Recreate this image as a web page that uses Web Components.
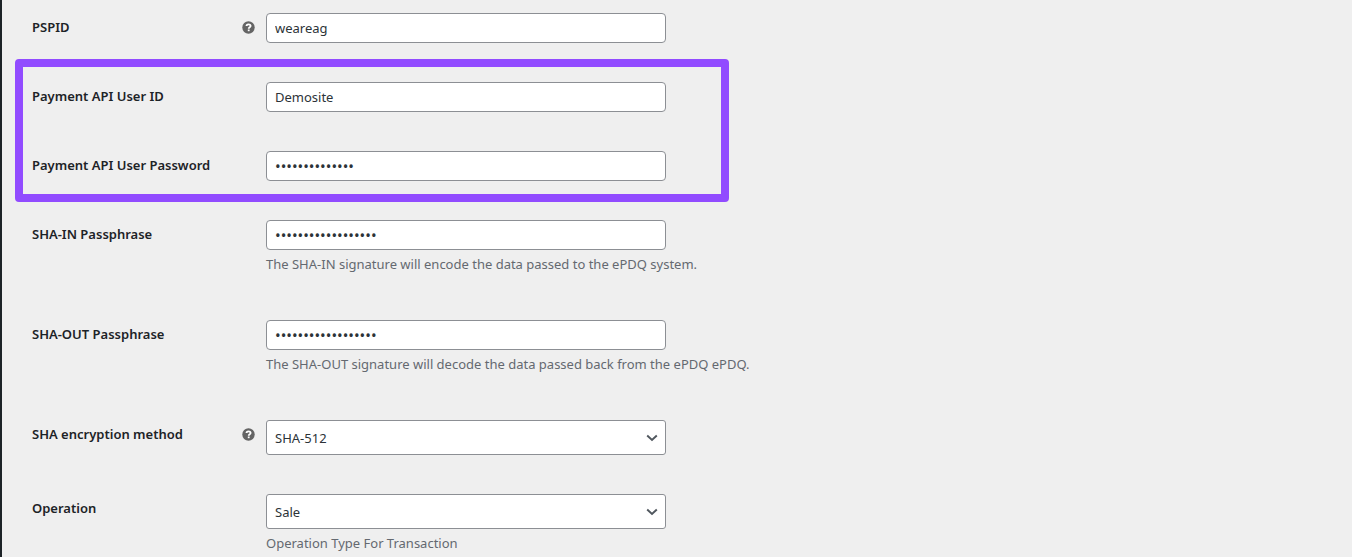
<!DOCTYPE html>
<html lang="en">
<head>
  <meta charset="utf-8">
  <meta name="viewport" content="width=device-width, initial-scale=1">
  <title>Payment settings</title>
  <style>
    body {
      margin: 0;
      background: #efefef;
      color: #1d2327;
      font-family: "Noto Sans", "Open Sans", sans-serif;
      font-size: 13px;
    }
  </style>
</head>
<body>
  <settings-page>
    <settings-field name="pspid" label="PSPID" value="weareag" help></settings-field>
    <highlight-group>
      <settings-field name="api-user" label="Payment API User ID" value="Demosite"></settings-field>
      <settings-field name="api-password" type="password" label="Payment API User Password" value="demo-site-pass"></settings-field>
    </highlight-group>
    <settings-field name="sha-in" type="password" label="SHA-IN Passphrase" value="sha-in-passphrase1">The SHA-IN signature will encode the data passed to the ePDQ system.</settings-field>
    <settings-field name="sha-out" type="password" label="SHA-OUT Passphrase" value="sha-out-passphrase">The SHA-OUT signature will decode the data passed back from the ePDQ ePDQ.</settings-field>
    <settings-field name="sha-method" type="select" label="SHA encryption method" value="SHA-512" help></settings-field>
    <settings-field name="operation" type="select" label="Operation" value="Sale">Operation Type For Transaction</settings-field>
  </settings-page>

  <script>
    class SettingsPage extends HTMLElement {
      connectedCallback() {
        this.attachShadow({ mode: 'open' });
        this.shadowRoot.innerHTML = `
          <style>
            :host {
              display: block;
              min-height: 100vh;
              box-sizing: border-box;
              border-left: 2px solid #1d2327;
              padding: 13px 30px 0;
              overflow: hidden;
            }
            form {
              display: flex;
              flex-direction: column;
              gap: 39px;
            }
          </style>
          <form><slot></slot></form>
        `;
      }
    }

    // Purple frame drawn around the rows it holds
    class HighlightGroup extends HTMLElement {
      connectedCallback() {
        this.attachShadow({ mode: 'open' });
        this.shadowRoot.innerHTML = `
          <style>
            :host {
              display: flex;
              flex-direction: column;
              gap: 39px;
              position: relative;
              max-width: 634px;
            }
            .frame {
              position: absolute;
              inset: -23px -63px -21px -17px;
              border: 8px solid #914bff;
              border-radius: 4px;
              pointer-events: none;
            }
          </style>
          <slot></slot>
          <div class="frame"></div>
        `;
      }
    }

    class HelpTip extends HTMLElement {
      connectedCallback() {
        this.attachShadow({ mode: 'open' });
        this.shadowRoot.innerHTML = `
          <style>
            :host { display: block; width: 13px; height: 13px; color: #646464; cursor: help; }
            svg { display: block; }
          </style>
          <svg width="13" height="13" viewBox="0 0 13 13" aria-hidden="true">
            <circle cx="6.5" cy="6.5" r="6.2" fill="currentColor"/>
            <path d="M4.5 5C4.5 3.8 5.3 3.3 6.5 3.3s2.1.6 2.1 1.7C8.6 6.3 6.7 6.2 6.7 7.7" fill="none" stroke="#fff" stroke-width="1.8"/>
            <rect x="5.8" y="8.5" width="1.8" height="1.7" fill="#fff"/>
          </svg>
        `;
      }
    }

    class SettingsField extends HTMLElement {
      connectedCallback() {
        const name = this.getAttribute('name');
        const label = this.getAttribute('label');
        const value = this.getAttribute('value');
        const type = this.getAttribute('type') || 'text';
        const help = this.hasAttribute('help') ? '<help-tip></help-tip>' : '';
        const description = this.textContent.trim() ? '<p><slot></slot></p>' : '';

        const options = {
          'sha-method': ['SHA-1', 'SHA-256', 'SHA-512'],
          'operation': ['Sale', 'Authorisation']
        };

        let control = `<input id="${name}" name="${name}" type="${type}" value="${value}" autocomplete="off">`;
        if (type === 'select') {
          const items = options[name].map(o => `<option${o === value ? ' selected' : ''}>${o}</option>`).join('');
          control = `
            <div class="select">
              <select id="${name}" name="${name}">${items}</select>
              <svg width="12" height="8" viewBox="0 0 12 8" aria-hidden="true">
                <path d="M1.2 1.5L6 6l4.8-4.5" fill="none" stroke="#50575e" stroke-width="1.9"/>
              </svg>
            </div>`;
        }

        this.attachShadow({ mode: 'open' });
        this.shadowRoot.innerHTML = `
          <style>
            :host {
              display: grid;
              grid-template-columns: 234px minmax(0, 1fr);
            }
            .heading {
              display: flex;
              justify-content: space-between;
              align-items: center;
              align-self: start;
              height: 18px;
              padding: 5px 11px 0 0;
            }
            label {
              font-weight: 600;
              line-height: 18px;
            }
            input, select {
              display: block;
              box-sizing: border-box;
              width: 100%;
              max-width: 400px;
              margin: 0;
              border: 1px solid #8c8f94;
              border-radius: 4px;
              background: #fff;
              color: #2c3338;
              font: inherit;
            }
            input {
              height: 30px;
              padding: 0 8px;
            }
            input[type="password"] {
              font-size: 15px;
            }
            .select {
              display: grid;
              max-width: 400px;
              align-items: center;
            }
            select {
              grid-area: 1 / 1;
              height: 35px;
              padding: 0 24px 0 8px;
              border-radius: 3px;
              appearance: none;
            }
            .select svg {
              grid-area: 1 / 1;
              justify-self: end;
              margin-right: 8px;
              pointer-events: none;
            }
            p {
              margin: 4px 0 6px;
              color: #646970;
              line-height: 21px;
            }
          </style>
          <div class="heading">
            <label for="${name}">${label}</label>
            ${help}
          </div>
          <div>
            ${control}
            ${description}
          </div>
        `;
      }
    }

    customElements.define('settings-page', SettingsPage);
    customElements.define('highlight-group', HighlightGroup);
    customElements.define('help-tip', HelpTip);
    customElements.define('settings-field', SettingsField);
  </script>
</body>
</html>
